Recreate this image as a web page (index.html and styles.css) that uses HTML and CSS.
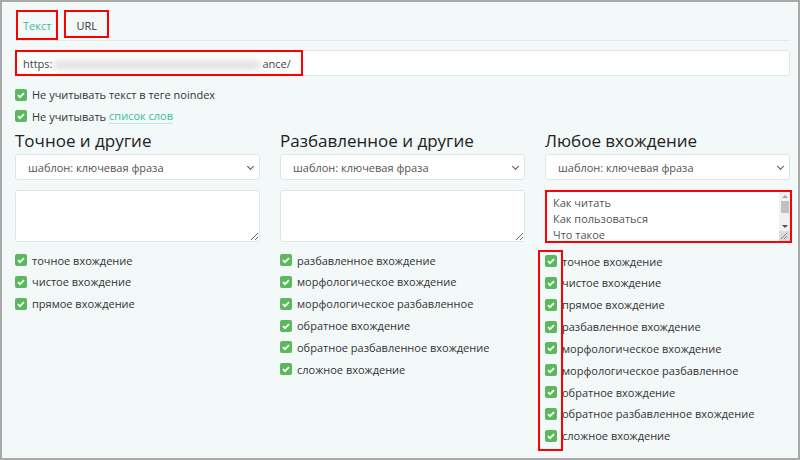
FILE: index.html
```html
<!DOCTYPE html>
<html lang="ru">
<head>
  <meta charset="UTF-8" />
  <title>Анализ вхождений</title>
  <link rel="stylesheet" href="styles.css">
</head>
<body>
  <div class="frame">
    <div class="tabs">
      <div class="tab active">Текст</div>
      <div class="tab">URL</div>
    </div>

    <div class="url">
      <span class="url-mark">https:<span class="blur"></span>ance/</span>
    </div>

    <div class="options">
      <label class="check"><span class="cb"></span>Не учитывать текст в теге noindex</label>
      <label class="check"><span class="cb"></span>Не учитывать <a href="#">список слов</a></label>
    </div>

    <div class="columns">
      <div class="col">
        <h3>Точное и другие</h3>
        <div class="select">шаблон: ключевая фраза</div>
        <textarea class="area"></textarea>
        <div class="list">
          <label class="check"><span class="cb"></span>точное вхождение</label>
          <label class="check"><span class="cb"></span>чистое вхождение</label>
          <label class="check"><span class="cb"></span>прямое вхождение</label>
        </div>
      </div>

      <div class="col">
        <h3>Разбавленное и другие</h3>
        <div class="select">шаблон: ключевая фраза</div>
        <textarea class="area"></textarea>
        <div class="list">
          <label class="check"><span class="cb"></span>разбавленное вхождение</label>
          <label class="check"><span class="cb"></span>морфологическое вхождение</label>
          <label class="check"><span class="cb"></span>морфологическое разбавленное</label>
          <label class="check"><span class="cb"></span>обратное вхождение</label>
          <label class="check"><span class="cb"></span>обратное разбавленное вхождение</label>
          <label class="check"><span class="cb"></span>сложное вхождение</label>
        </div>
      </div>

      <div class="col">
        <h3>Любое вхождение</h3>
        <div class="select">шаблон: ключевая фраза</div>
        <div class="area-wrap">
          <textarea class="area-inner">Как читать
Как пользоваться
Что такое
Где купить
Сколько стоит</textarea>
          <div class="scrollbar">
            <span class="arrow up"></span>
            <span class="thumb"></span>
            <span class="track"></span>
            <span class="arrow down"></span>
            <span class="grip">
              <svg width="9" height="9" viewBox="0 0 9 9"><path d="M8 2L2 8M8 5L5 8" stroke="#888" stroke-width="1"/></svg>
            </span>
          </div>
        </div>
        <div class="list">
          <div class="list-mark"></div>
          <label class="check"><span class="cb"></span>точное вхождение</label>
          <label class="check"><span class="cb"></span>чистое вхождение</label>
          <label class="check"><span class="cb"></span>прямое вхождение</label>
          <label class="check"><span class="cb"></span>разбавленное вхождение</label>
          <label class="check"><span class="cb"></span>морфологическое вхождение</label>
          <label class="check"><span class="cb"></span>морфологическое разбавленное</label>
          <label class="check"><span class="cb"></span>обратное вхождение</label>
          <label class="check"><span class="cb"></span>обратное разбавленное вхождение</label>
          <label class="check"><span class="cb"></span>сложное вхождение</label>
        </div>
      </div>
    </div>
  </div>
</body>
</html>
```

FILE: styles.css
```css
* {
  margin: 0; padding: 0;
  box-sizing: border-box;
  font-family: 'Open Sans', 'Noto Sans', sans-serif;
}
body {
  background-color: #a9a9a9;
  color: #333;
  font-size: 11px;
}
.frame {
  width: 800px;
  height: 460px;
  border: 2px solid #a9a9a9;
  background-color: #f3f8f8;
  padding: 8px 8px 0 13px;
  overflow: hidden;
}
.tabs {
  display: flex;
  align-items: flex-start;
  gap: 6px;
  padding-left: 1px;
  border-bottom: 1px solid #e2e9e9;
  height: 31px;
  margin-bottom: 9px;
}
.tab {
  border: 2px solid #f00;
  padding: 6px 10px;
  height: 28px;
  font-size: 11px;
  color: #333;
}
.tab.active {
  color: #3cbc9c;
  height: 30px;
  padding: 6px 5px;
}
.url {
  background-color: #fff;
  border: 1px solid #e1e7e7;
  border-radius: 3px;
  height: 26px;
  display: flex;
}
.url-mark {
  border: 2px solid #f00;
  margin: -1px;
  width: 288px;
  padding: 4px 6px;
  font-size: 11px;
  color: #444;
  white-space: nowrap;
  overflow: hidden;
}
.blur {
  display: inline-block;
  width: 208px;
  height: 10px;
  margin: 0 1px;
  vertical-align: middle;
  background-color: #e2e2e2;
  border-radius: 5px;
  filter: blur(3px);
}
.options {
  padding-top: 10px;
  display: flex;
  flex-direction: column;
  gap: 4.5px;
}
.check {
  display: flex;
  align-items: center;
  height: 17px;
  font-size: 11px;
  color: #333;
  white-space: nowrap;
}
.check a {
  color: #3cbc9c;
  text-decoration: none;
  border-bottom: 1px solid #bde8dd;
  margin-left: 3px;
  line-height: 14px;
}
.cb {
  width: 12px;
  height: 12px;
  border-radius: 2px;
  background-color: #5cb85c;
  margin-right: 5px;
  flex-shrink: 0;
  background-image: url("data:image/svg+xml,%3Csvg xmlns='http://www.w3.org/2000/svg' viewBox='0 0 12 12'%3E%3Cpath d='M3 6.2l2 2 4-4' fill='none' stroke='white' stroke-width='1.8'/%3E%3C/svg%3E");
}
.columns {
  display: grid;
  grid-template-columns: repeat(3, 1fr);
  column-gap: 20px;
  margin-top: 3px;
}
h3 {
  font-size: 17px;
  font-weight: normal;
  color: #222;
  line-height: 22px;
  padding-top: 2px;
  margin-bottom: 2px;
}
.select {
  background-color: #fff;
  border: 1px solid #e0e6e6;
  border-radius: 3px;
  height: 26px;
  padding: 5px 12px;
  font-size: 11px;
  color: #555;
  position: relative;
}
.select::after {
  content: "";
  position: absolute;
  right: 6px;
  top: 9px;
  width: 4px;
  height: 4px;
  border-right: 1px solid #555;
  border-bottom: 1px solid #555;
  transform: rotate(45deg);
}
.area {
  display: block;
  width: 100%;
  height: 52px;
  margin-top: 10px;
  background-color: #fff;
  border: 1px solid #e0e6e6;
  border-radius: 3px;
  resize: vertical;
}
.area-wrap {
  position: relative;
  margin-top: 10px;
  width: calc(100% + 2px);
  height: 53px;
  border: 2px solid #f00;
  background-color: #fff;
}
.area-inner {
  display: block;
  width: 100%;
  height: 100%;
  border: none;
  resize: none;
  overflow: hidden;
  padding: 3px 6px;
  font-size: 11px;
  line-height: 16px;
  color: #555;
}
.scrollbar {
  position: absolute;
  top: 0;
  right: 0;
  bottom: 0;
  width: 11px;
  background-color: #f1f1f1;
  display: flex;
  flex-direction: column;
  align-items: center;
}
.arrow {
  height: 9px;
  width: 11px;
  display: flex;
  align-items: center;
  justify-content: center;
}
.arrow::before {
  content: "";
  border-left: 3px solid transparent;
  border-right: 3px solid transparent;
}
.arrow.up::before {
  border-bottom: 3px solid #a3a3a3;
}
.arrow.down::before {
  border-top: 3px solid #505050;
}
.thumb {
  width: 8px;
  height: 12px;
  background-color: #c1c1c1;
}
.track {
  flex: 1;
}
.grip {
  height: 10px;
  width: 11px;
  background-color: #dcdcdc;
  display: flex;
}
.list {
  margin-top: 10px;
  display: flex;
  flex-direction: column;
  gap: 4.85px;
  position: relative;
}
.list-mark {
  position: absolute;
  left: -7px;
  top: -3px;
  width: 25px;
  height: 201px;
  border: 2px solid #f00;
}
```
